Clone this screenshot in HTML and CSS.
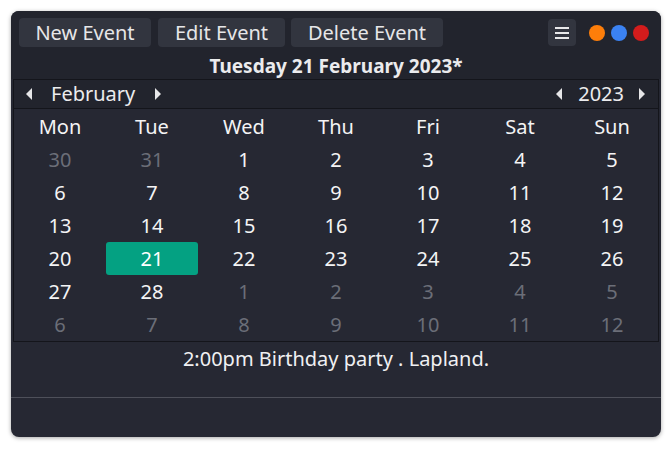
FILE: index.html
```html
<!DOCTYPE html>
<html>
<head>
<meta charset="utf-8">
<link rel="stylesheet" href="styles.css">
</head>
<body>
<div class="window">
  <div class="toolbar">
    <button class="btn btn-new">New Event</button>
    <button class="btn btn-edit">Edit Event</button>
    <button class="btn btn-delete">Delete Event</button>
    <div class="spacer"></div>
    <button class="menu"><svg width="14" height="12" viewBox="0 0 14 12"><rect x="0" y="0" width="14" height="2" fill="#e8e8ea"/><rect x="0" y="5" width="14" height="2" fill="#e8e8ea"/><rect x="0" y="10" width="14" height="2" fill="#e8e8ea"/></svg></button>
    <div class="dots"><span class="dot orange"></span><span class="dot blue"></span><span class="dot red"></span></div>
  </div>
  <div class="title">Tuesday 21 February 2023*</div>
  <div class="calendar">
    <div class="nav">
      <div class="navgroup month">
        <span class="arrow left"></span><span class="navlabel">February</span><span class="arrow right"></span>
      </div>
      <div class="navgroup year">
        <span class="arrow left"></span><span class="navlabel">2023</span><span class="arrow right"></span>
      </div>
    </div>
    <div class="grid">
      <div class="cell head">Mon</div><div class="cell head">Tue</div><div class="cell head">Wed</div><div class="cell head">Thu</div><div class="cell head">Fri</div><div class="cell head">Sat</div><div class="cell head">Sun</div>
      <div class="cell dim">30</div><div class="cell dim">31</div><div class="cell">1</div><div class="cell">2</div><div class="cell">3</div><div class="cell">4</div><div class="cell">5</div>
      <div class="cell">6</div><div class="cell">7</div><div class="cell">8</div><div class="cell">9</div><div class="cell">10</div><div class="cell">11</div><div class="cell">12</div>
      <div class="cell">13</div><div class="cell">14</div><div class="cell">15</div><div class="cell">16</div><div class="cell">17</div><div class="cell">18</div><div class="cell">19</div>
      <div class="cell">20</div><div class="cell sel">21</div><div class="cell">22</div><div class="cell">23</div><div class="cell">24</div><div class="cell">25</div><div class="cell">26</div>
      <div class="cell">27</div><div class="cell">28</div><div class="cell dim">1</div><div class="cell dim">2</div><div class="cell dim">3</div><div class="cell dim">4</div><div class="cell dim">5</div>
      <div class="cell dim">6</div><div class="cell dim">7</div><div class="cell dim">8</div><div class="cell dim">9</div><div class="cell dim">10</div><div class="cell dim">11</div><div class="cell dim">12</div>
    </div>
  </div>
  <div class="events">2:00pm Birthday party . Lapland.</div>
  <div class="footer"></div>
</div>
</body>
</html>
```
FILE: styles.css
```css
html, body {
  margin: 0;
  padding: 0;
  background: #ffffff;
}
body {
  padding: 11px;
  font-family: "Noto Sans", "DejaVu Sans", sans-serif;
  color: #f2f2f3;
}
.window {
  width: 650px;
  height: 426px;
  box-sizing: border-box;
  background: #262833;
  border-radius: 8px;
  box-shadow: 0 1px 4px rgba(0,0,0,0.35);
  display: flex;
  flex-direction: column;
  overflow: hidden;
}
.toolbar {
  background: #22242d;
  display: flex;
  align-items: center;
  padding: 7px 8px 0 8px;
  height: 36px;
  box-sizing: border-box;
  gap: 7px;
}
.btn {
  height: 29px;
  padding: 0;
  border: none;
  border-radius: 4px;
  background: #32353f;
  color: #e6e6e8;
  font-family: inherit;
  font-size: 20px;
  line-height: 29px;
  text-align: center;
}
.btn-new { width: 132px; }
.btn-edit { width: 127px; }
.btn-delete { width: 152px; margin-left: -1px; }
.spacer { flex: 1; }
.menu {
  width: 28px;
  height: 27px;
  border: none;
  border-radius: 4px;
  background: #32353f;
  display: flex;
  align-items: center;
  justify-content: center;
  padding: 0;
  margin-right: 6px;
}
.dots {
  display: flex;
  gap: 6px;
  margin-right: 4px;
}
.dot {
  width: 16px;
  height: 16px;
  border-radius: 50%;
  display: block;
}
.orange { background: #fd7e0a; }
.blue { background: #3b82f2; }
.red { background: #d31c1c; }
.title {
  background: #22242d;
  text-align: center;
  font-weight: bold;
  font-size: 19px;
  height: 32px;
  box-sizing: border-box;
  padding-top: 7px;
  line-height: 25px;
  color: #ebebed;
}
.calendar {
  margin: 0 2px;
  border: 1px solid #14151b;
}
.nav {
  height: 28px;
  display: flex;
  justify-content: space-between;
  align-items: center;
  border-bottom: 1px solid #14151b;
  background: #22242d;
  padding: 0 13px 0 12px;
}
.navgroup {
  display: flex;
  align-items: center;
}
.navlabel {
  font-size: 20px;
  line-height: 28px;
  color: #ececee;
}
.month .navlabel { padding: 0 20px 0 19px; }
.year .navlabel { padding: 0 15px 0 16px; }
.arrow {
  width: 0;
  height: 0;
  border-top: 6px solid transparent;
  border-bottom: 6px solid transparent;
  display: block;
}
.arrow.left { border-right: 6px solid #e6e6e8; }
.arrow.right { border-left: 6px solid #e6e6e8; }
.grid {
  display: grid;
  grid-template-columns: repeat(7, 92px);
  grid-auto-rows: 33px;
  padding-top: 1px;
  background: #262833;
}
.cell {
  display: flex;
  align-items: center;
  justify-content: center;
  font-size: 20px;
  color: #f4f4f5;
  border-radius: 3px;
}
.cell.dim { color: #6b6e78; }
.cell.sel { background: #04a182; color: #ffffff; }
.events {
  text-align: center;
  font-size: 20px;
  height: 55px;
  line-height: 34px;
  color: #f0f0f2;
  border-bottom: 1px solid #4e505a;
}
.footer {
  flex: 1;
}
```
